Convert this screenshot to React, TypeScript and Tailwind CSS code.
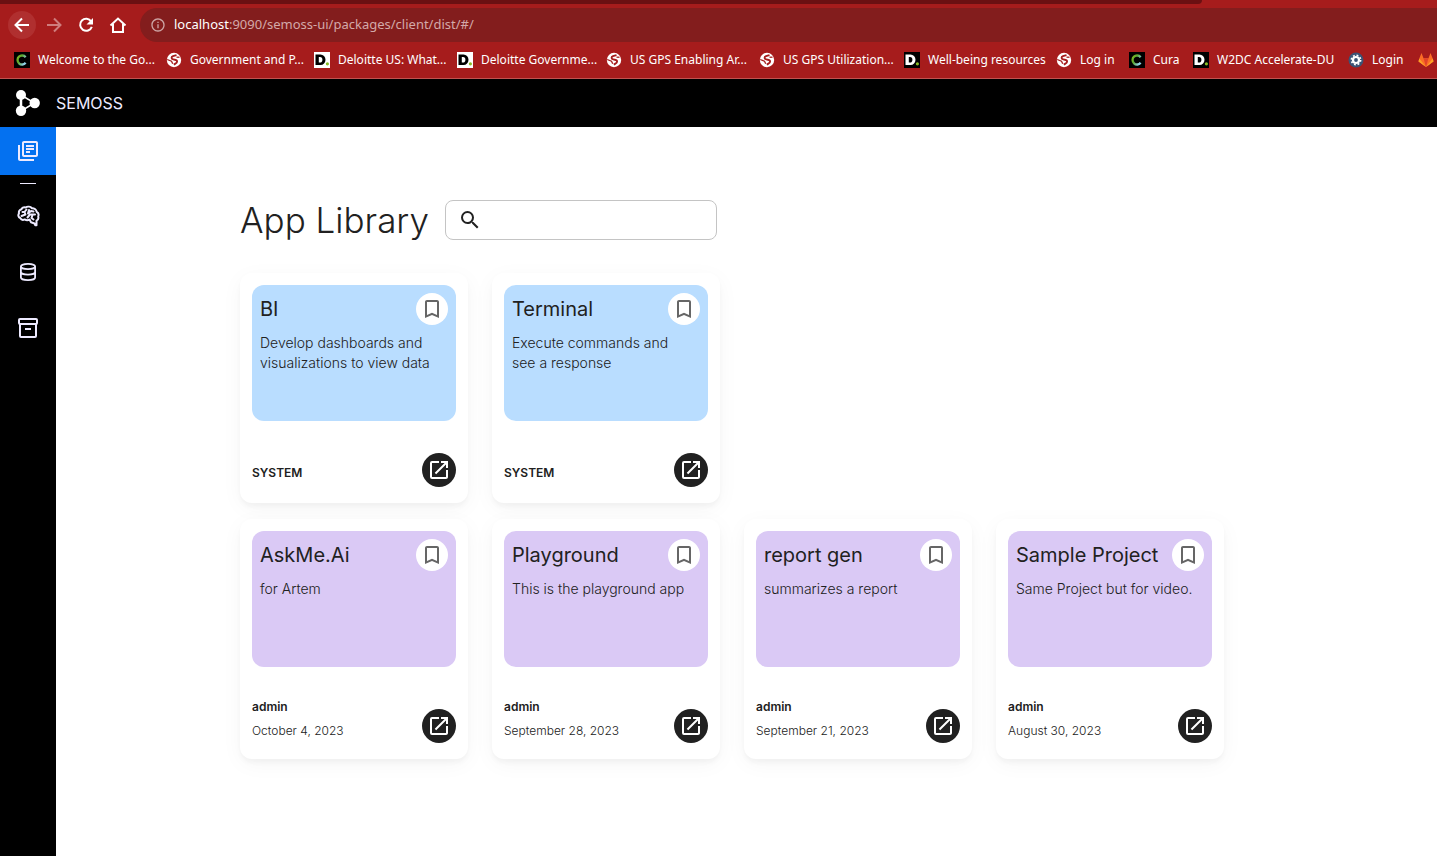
import React from "react";
import { MdOutlineLibraryBooks, MdSearch, MdBookmarkBorder, MdOpenInNew, MdInfoOutline } from "react-icons/md";

type Kind = "cura" | "globe" | "dWhite" | "dBlack" | "gear" | "fox";

function Favicon({ kind }: { kind: Kind }) {
  if (kind === "cura") {
    return (
      <svg viewBox="0 0 16 16" className="size-4 shrink-0">
        <defs>
          <linearGradient id="ring" x1="0" y1="0" x2="1" y2="0.6">
            <stop offset="0" stopColor="#86bc25" />
            <stop offset="0.4" stopColor="#5aa52c" />
            <stop offset="1" stopColor="#8fd0e8" />
          </linearGradient>
        </defs>
        <rect width="16" height="16" fill="#000" />
        <path d="M11.600 5.200A4.500 4.500 0 1 0 11.600 10.800" fill="none" stroke="url(#ring)" strokeWidth="2.300" />
      </svg>
    );
  }
  if (kind === "globe") {
    return (
      <svg viewBox="0 0 16 16" className="size-4 shrink-0">
        <circle cx="8" cy="8" r="7.200" fill="#fff" />
        <path d="M10.500 3.200 7 4.200C5 5 5.200 7 7.200 7.400l2.600.6c2 .6 1.600 2.600-.4 3.600l-1.600 1" fill="none" stroke="#a61c1c" strokeWidth="1.900" />
        <path d="M1.200 7.500 5.500 9.200l1.200 2.600" fill="none" stroke="#a61c1c" strokeWidth="1.300" />
        <path d="M10.500 5.200h3" fill="none" stroke="#a61c1c" strokeWidth="1.300" />
      </svg>
    );
  }
  if (kind === "gear") {
    return (
      <svg viewBox="0 0 16 16" className="size-4 shrink-0">
        <circle cx="8" cy="8" r="7.500" fill="#3b5375" />
        <circle cx="8" cy="8" r="3" fill="none" stroke="#fff" strokeWidth="2.200" />
        <circle cx="8" cy="8" r="4.700" fill="none" stroke="#fff" strokeWidth="1.500" strokeDasharray="1.850 1.840" />
      </svg>
    );
  }
  if (kind === "fox") {
    return (
      <svg viewBox="0 0 16 16" className="size-4 shrink-0">
        <path d="M8 15 .5 9.400 1.300 6.500 3.500 1l2 5.200h5L12.500 1l2.200 5.500.8 2.900z" fill="#fc6d26" />
        <path d="M8 15 5.500 6.200h5z" fill="#e24329" />
        <path d="M8 15 .5 9.400l.8-2.900z" fill="#fca326" />
        <path d="M8 15l7.500-5.600-.8-2.900z" fill="#fca326" />
      </svg>
    );
  }
  const white = kind === "dWhite";
  return (
    <svg viewBox="0 0 16 16" className="size-4 shrink-0">
      <rect width="16" height="16" fill={white ? "#fff" : "#000"} />
      <path fillRule="evenodd" d="M1.500 2.500h5a5 5.300 0 0 1 0 10.600h-5zM4.800 5v5.600h1.200a2.400 2.800 0 0 0 0-5.600z" fill={white ? "#000" : "#fff"} />
      <circle cx="13.400" cy="11.800" r="1.600" fill="#86bc25" />
    </svg>
  );
}

const bookmarks: { kind: Kind; label: string; width: string }[] = [
  { kind: "cura", label: "Welcome to the Go...", width: "w-38" },
  { kind: "globe", label: "Government and P...", width: "w-37" },
  { kind: "dWhite", label: "Deloitte US: What...", width: "w-[143px]" },
  { kind: "dWhite", label: "Deloitte Governme...", width: "w-[149px]" },
  { kind: "globe", label: "US GPS Enabling Ar...", width: "w-[153px]" },
  { kind: "globe", label: "US GPS Utilization...", width: "w-[145px]" },
  { kind: "dBlack", label: "Well-being resources", width: "w-38" },
  { kind: "globe", label: "Log in", width: "w-[73px]" },
  { kind: "cura", label: "Cura", width: "w-16" },
  { kind: "dBlack", label: "W2DC Accelerate-DU", width: "w-[155px]" },
  { kind: "gear", label: "Login", width: "w-[70px]" },
  { kind: "fox", label: "", width: "w-4" },
];

function ToolbarIcon({ d, fill }: { d: string; fill?: string }) {
  return (
    <svg viewBox="0 0 20 20" className="size-5" fill="none" stroke="currentColor" strokeWidth="2">
      <path d={d} />
      {fill && <path d={fill} fill="currentColor" stroke="none" />}
    </svg>
  );
}

function BrowserBar() {
  return (
    <div className="overflow-hidden border-b border-[#c0524f] bg-[#a61c1c] font-['Noto_Sans',sans-serif] text-white">
      <div className="h-1 w-[1202px] max-w-full rounded-br-md bg-[#6b1012]" />
      <div className="flex h-[42px] items-center pl-2">
        <button aria-label="Back" className="flex size-7 items-center justify-center rounded-full bg-[#b02f2f]">
          <ToolbarIcon d="M17 10H4M10 3.500 3.500 10l6.500 6.500" />
        </button>
        <button aria-label="Forward" className="ml-1.5 flex size-6 items-center justify-center text-[#cf7d7d]">
          <ToolbarIcon d="M3 10h13M10 3.500l6.500 6.500-6.500 6.500" />
        </button>
        <button aria-label="Reload" className="ml-2 flex size-6 items-center justify-center">
          <ToolbarIcon d="M15.200 6.500A6 6 0 1 0 15.800 11.800" fill="M17 3v6.500h-6.500z" />
        </button>
        <button aria-label="Home" className="ml-2 flex size-6 items-center justify-center">
          <ToolbarIcon d="M2.500 10.500 10 3.500l7.500 7M5 9v8h10V9" />
        </button>
        <div className="ml-2.5 flex h-[34px] flex-1 items-center gap-2 rounded-l-full bg-[#831d1d] pl-2.5">
          <MdInfoOutline className="size-4 text-[#cda5a5]" />
          <span className="text-[13px] text-[#d3a9a9]">
            <span className="text-white">localhost</span>:9090/semoss-ui/packages/client/dist/#/
          </span>
        </div>
      </div>
      <nav aria-label="Bookmarks" className="flex h-8 items-center pb-1 pl-3.5">
        {bookmarks.map((b, i) => (
          <a key={i} href="#" aria-label={b.label || "GitLab"} className={`flex shrink-0 items-center gap-2 text-xs whitespace-nowrap ${b.width}`}>
            <Favicon kind={b.kind} />
            {b.label}
          </a>
        ))}
      </nav>
    </div>
  );
}

function Logo() {
  return (
    <svg viewBox="0 0 26 28" className="h-7 w-[26px]" fill="#fff" stroke="#fff">
      <path d="M7 6v16" fill="none" strokeWidth="2.500" />
      <path d="M7 6 20.500 14 7 22" fill="none" strokeWidth="1.500" />
      <circle cx="7" cy="6" r="5" stroke="none" />
      <circle cx="20.700" cy="14" r="5.200" stroke="none" />
      <circle cx="7" cy="21.700" r="5.200" stroke="none" />
    </svg>
  );
}

function BrainIcon() {
  return (
    <svg viewBox="0 0 24 24" className="size-6" fill="none" stroke="#edeaff" strokeWidth="2" strokeLinecap="round" strokeLinejoin="round">
      <path d="M9.500 3.500C7.500 2.800 5.800 4 5.500 5.300 3.500 5.800 2.500 7.500 3 9.300 1.800 11 2.300 13.300 4.200 14c1 1.800 3 2.200 4.500 1.400 1.500 1 3.300 1 4.800.2l1.500 2.600 3.500 1.300.7 1.700h1.300v-4.500c1.500-.7 2.200-2.400 1.700-4.200.8-2 .3-3.700-1.500-4.700C20.200 5.500 18 4 16 4.200 14.500 2.700 11.500 2.200 9.500 3.500z" />
      <path d="M10.500 5.500 8.500 8H6.500M8.500 8l1 2.500-4 1.500M13 6l-1 3.500 3-2.500 2.500.5M11.500 13.500 14 10.500h5M16.500 11l-1 3 2 1.500" />
    </svg>
  );
}

function DatabaseIcon() {
  return (
    <svg viewBox="0 0 24 24" className="size-6" fill="none" stroke="#edeaff" strokeWidth="1.800">
      <ellipse cx="12" cy="6.500" rx="7.100" ry="2.700" />
      <path d="M4.900 6.500v11c0 1.500 3.200 2.700 7.100 2.700s7.100-1.200 7.100-2.700v-11M4.900 12c0 1.500 3.200 2.700 7.100 2.700s7.100-1.200 7.100-2.700" />
    </svg>
  );
}

function ArchiveIcon() {
  return (
    <svg viewBox="0 0 24 24" className="size-6" fill="none" stroke="#edeaff" strokeWidth="2" strokeLinejoin="round">
      <rect x="3" y="3" width="18" height="5" rx="1" />
      <path d="M4 8v12a1 1 0 0 0 1 1h14a1 1 0 0 0 1-1V8M9 13h6" />
    </svg>
  );
}

type AppInfo = { name: string; text: string; owner: string; date?: string };

function AppCard({ app, tone }: { app: AppInfo; tone: string }) {
  return (
    <article className="rounded-xl bg-white p-3 shadow-[0_5px_22px_rgba(0,0,0,0.04),0_4px_4px_rgba(0,0,0,0.03)]">
      <div className={`h-34 rounded-xl p-2 ${tone}`}>
        <div className="flex h-8 items-center justify-between">
          <h2 className="text-xl whitespace-nowrap text-[#212121]">{app.name}</h2>
          <button aria-label={`Bookmark ${app.name}`} className="flex size-8 shrink-0 items-center justify-center rounded-full bg-white text-[#666]">
            <MdBookmarkBorder className="size-6" />
          </button>
        </div>
        <p className="mt-2 pr-2 text-sm leading-5 font-light text-[#212121]">{app.text}</p>
      </div>
      <div className={`flex items-end justify-between pb-1 ${app.date ? "mt-7" : "mt-8"}`}>
        <div className={`flex flex-col text-xs leading-6 text-[#212121] ${app.date ? "" : "pb-0.5"}`}>
          <span className="font-semibold">{app.owner}</span>
          {app.date && <time className="font-light">{app.date}</time>}
        </div>
        <button aria-label={`Open ${app.name}`} className="flex size-[34px] items-center justify-center rounded-full bg-[#212121] text-white">
          <MdOpenInNew className="size-6" />
        </button>
      </div>
    </article>
  );
}

const systemApps: AppInfo[] = [
  { name: "BI", text: "Develop dashboards and visualizations to view data", owner: "SYSTEM" },
  { name: "Terminal", text: "Execute commands and see a response", owner: "SYSTEM" },
];

const userApps: AppInfo[] = [
  { name: "AskMe.Ai", text: "for Artem", owner: "admin", date: "October 4, 2023" },
  { name: "Playground", text: "This is the playground app", owner: "admin", date: "September 28, 2023" },
  { name: "report gen", text: "summarizes a report", owner: "admin", date: "September 21, 2023" },
  { name: "Sample Project", text: "Same Project but for video.", owner: "admin", date: "August 30, 2023" },
];

export default function App() {
  return (
    <div className="flex min-h-screen flex-col bg-white font-['Inter',sans-serif]">
      <BrowserBar />
      <header className="flex h-12 items-center gap-4 bg-black pl-3.5 text-[#edeaff]">
        <Logo />
        <span className="text-base">SEMOSS</span>
      </header>
      <div className="flex flex-1">
        <nav aria-label="Main" className="flex w-14 shrink-0 flex-col items-center bg-black text-[#edeaff]">
          <a href="#" aria-label="App Library" className="flex h-12 w-full items-center justify-center bg-[#0471f0]">
            <MdOutlineLibraryBooks className="size-6" />
          </a>
          <div className="mt-2 mb-1 h-px w-4 bg-[#edeaff]" />
          <a href="#" aria-label="Models" className="flex h-14 w-full items-center justify-center"><BrainIcon /></a>
          <a href="#" aria-label="Databases" className="flex h-14 w-full items-center justify-center"><DatabaseIcon /></a>
          <a href="#" aria-label="Storage" className="flex h-14 w-full items-center justify-center"><ArchiveIcon /></a>
        </nav>
        <main className="flex-1 px-6 pt-[73px]">
          <div className="mx-auto max-w-[1013px]">
            <div className="flex items-center gap-4">
              <h1 className="text-[35px] leading-10 font-light whitespace-nowrap text-[#212121]">App Library</h1>
              <label className="flex h-10 w-[272px] items-center gap-2 rounded-lg border border-[#c4c4c4] px-3 text-[#212121]">
                <MdSearch className="size-6" />
                <input type="search" aria-label="Search apps" className="min-w-0 flex-1 outline-none" />
              </label>
            </div>
            <div className="mt-[33px] grid grid-cols-[repeat(auto-fill,228px)] gap-x-6">
              {systemApps.map((a) => <AppCard key={a.name} app={a} tone="bg-[#b9ddff]" />)}
            </div>
            <div className="mt-4 grid grid-cols-[repeat(auto-fill,228px)] gap-x-6">
              {userApps.map((a) => <AppCard key={a.name} app={a} tone="bg-[#dac9f5]" />)}
            </div>
          </div>
        </main>
      </div>
    </div>
  );
}
